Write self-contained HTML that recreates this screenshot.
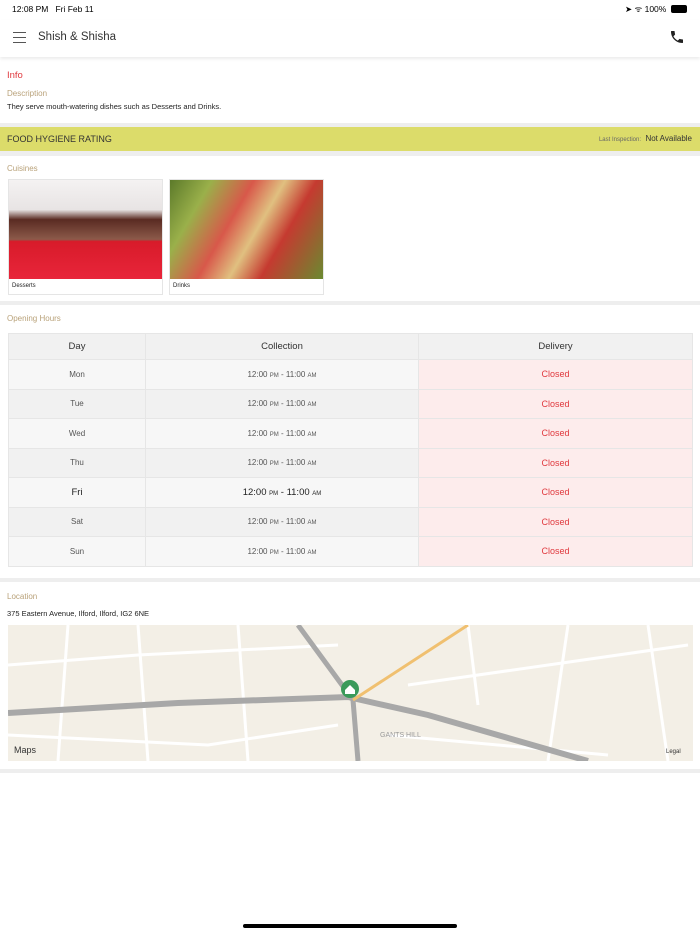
<!DOCTYPE html>
<html><head><style>
*{margin:0;padding:0;box-sizing:border-box}
body{width:700px;height:934px;background:#fff;font-family:"Liberation Sans",sans-serif;position:relative;overflow:hidden;color:#222}
.a{position:absolute}
.sep{position:absolute;left:0;width:700px;background:#eeeeee}
.lbl{position:absolute;left:7px;font-size:8px;color:#b9a27a}
table{position:absolute;left:8px;top:333px;width:685px;border-collapse:collapse;font-size:8px;color:#555}
td,th{border:1px solid #e6e6e6;text-align:center;height:29.5px;font-weight:normal}
th{background:#f1f1f1;font-size:9.5px;color:#333;height:26px}
tr:nth-child(even) td{background:#f7f7f7}
tr:nth-child(odd) td{background:#f1f1f1}
td.c{background:#fdecec!important;color:#e0393e;font-size:9px}
small{font-size:6px}
</style></head><body>
<div class="a" style="left:12px;top:4px;font-size:8.5px;color:#000">12:08 PM&nbsp;&nbsp; Fri Feb 11</div>
<div class="a" style="left:625px;top:4px;font-size:8.5px;color:#000">➤ ᯤ 100%</div>
<div class="a" style="left:671px;top:5px;width:16px;height:8px;border:1px solid #000;border-radius:2px;background:#000"></div>
<div class="a" style="left:0;top:20px;width:700px;height:37px;background:#fff;box-shadow:0 2px 3px rgba(0,0,0,.08)"></div>
<div class="a" style="left:13px;top:32px;width:13px;height:1px;background:#555;box-shadow:0 5px 0 #555,0 10px 0 #555"></div>
<div class="a" style="left:38px;top:31px;font-size:11.5px;color:#333">Shish &amp; Shisha</div>
<svg class="a" style="left:669px;top:29px" width="16" height="16" viewBox="0 0 24 24"><path d="M6.6 10.8c1.4 2.8 3.8 5.1 6.6 6.6l2.2-2.2c.3-.3.7-.4 1-.2 1.1.4 2.3.6 3.6.6.6 0 1 .4 1 1V20c0 .6-.4 1-1 1C10.6 21 3 13.4 3 4c0-.6.4-1 1-1h3.5c.6 0 1 .4 1 1 0 1.3.2 2.5.6 3.6.1.3 0 .7-.2 1z" fill="#222"/></svg>
<div class="a" style="left:7px;top:70px;font-size:9.5px;color:#e0393e">Info</div>
<div class="lbl" style="top:89px">Description</div>
<div class="a" style="left:7px;top:102px;font-size:7.5px">They serve mouth-watering dishes such as Desserts and Drinks.</div>
<div class="sep" style="top:123px;height:33px"></div>
<div class="a" style="left:0;top:127px;width:700px;height:24px;background:#dcdc6a"></div>
<div class="a" style="left:7px;top:134px;font-size:9px;color:#333">FOOD HYGIENE RATING</div>
<div class="a" style="right:8px;top:134px;font-size:8px;color:#333"><span style="font-size:6px;color:#666">Last Inspection:</span>&nbsp; Not Available</div>
<div class="lbl" style="top:164px">Cuisines</div>
<div class="a" style="left:8px;top:179px;width:155px;height:116px;border:1px solid #e5e5e5;background:#fff">
<div style="height:99px;background:linear-gradient(180deg,#f4f2f2 0%,#e8e4e4 30%,#5a2b22 40%,#8c5a4a 60%,#d81b2a 62%,#e8253a 100%)"></div>
<div style="font-size:6px;padding:4px 3px">Desserts</div></div>
<div class="a" style="left:169px;top:179px;width:155px;height:116px;border:1px solid #e5e5e5;background:#fff">
<div style="height:99px;background:linear-gradient(120deg,#5c7a2a 0%,#9ab04a 20%,#d8584a 40%,#e0c080 55%,#c53a30 70%,#6a8a30 100%)"></div>
<div style="font-size:6px;padding:4px 3px">Drinks</div></div>
<div class="sep" style="top:301px;height:4px"></div>
<div class="lbl" style="top:314px">Opening Hours</div>
<table>
<tr><th style="width:137px">Day</th><th style="width:273px">Collection</th><th>Delivery</th></tr>
<tr><td>Mon</td><td>12:00 <small>PM</small> - 11:00 <small>AM</small></td><td class="c">Closed</td></tr>
<tr><td>Tue</td><td>12:00 <small>PM</small> - 11:00 <small>AM</small></td><td class="c">Closed</td></tr>
<tr><td>Wed</td><td>12:00 <small>PM</small> - 11:00 <small>AM</small></td><td class="c">Closed</td></tr>
<tr><td>Thu</td><td>12:00 <small>PM</small> - 11:00 <small>AM</small></td><td class="c">Closed</td></tr>
<tr><td style="font-size:9.5px;color:#222">Fri</td><td style="font-size:9.5px;color:#222">12:00 <small>PM</small> - 11:00 <small>AM</small></td><td class="c">Closed</td></tr>
<tr><td>Sat</td><td>12:00 <small>PM</small> - 11:00 <small>AM</small></td><td class="c">Closed</td></tr>
<tr><td>Sun</td><td>12:00 <small>PM</small> - 11:00 <small>AM</small></td><td class="c">Closed</td></tr>
</table>
<div class="sep" style="top:578px;height:4px"></div>
<div class="lbl" style="top:592px">Location</div>
<div class="a" style="left:7px;top:609px;font-size:7.5px">375 Eastern Avenue, Ilford, Ilford, IG2 6NE</div>
<svg class="a" style="left:8px;top:625px" width="685" height="136" viewBox="0 0 685 136">
<rect width="685" height="136" fill="#f3efe6"/>
<g stroke="#fff" stroke-width="3" fill="none">
<path d="M0 40 L130 30 L330 20"/><path d="M0 110 L200 120 L330 100"/><path d="M400 60 L680 20"/><path d="M380 110 L600 130"/>
<path d="M230 0 L240 136"/><path d="M130 0 L140 136"/><path d="M460 0 L470 80"/><path d="M560 0 L540 136"/><path d="M640 0 L660 136"/><path d="M60 0 L50 136"/>
</g>
<path d="M0 88 L170 78 L340 72 L420 90 L580 136" stroke="#a8a8a8" stroke-width="6" fill="none"/>
<path d="M290 0 L345 75 L350 136" stroke="#a8a8a8" stroke-width="5" fill="none"/>
<path d="M345 75 L460 0" stroke="#f0c070" stroke-width="3" fill="none"/>
<circle cx="342" cy="64" r="9" fill="#3a9a5a"/><path d="M337 65 L342 60 L347 65 V69 H337Z" fill="#fff"/>
<text x="6" y="128" font-size="9" fill="#333" font-family="Liberation Sans"> Maps</text>
<text x="658" y="128" font-size="6" fill="#333" font-family="Liberation Sans">Legal</text>
<text x="372" y="112" font-size="7" fill="#999" font-family="Liberation Sans">GANTS HILL</text>
</svg>
<div class="sep" style="top:769px;height:4px"></div>
<div class="a" style="left:243px;top:924px;width:214px;height:4px;border-radius:2px;background:#000"></div>
</body></html>
